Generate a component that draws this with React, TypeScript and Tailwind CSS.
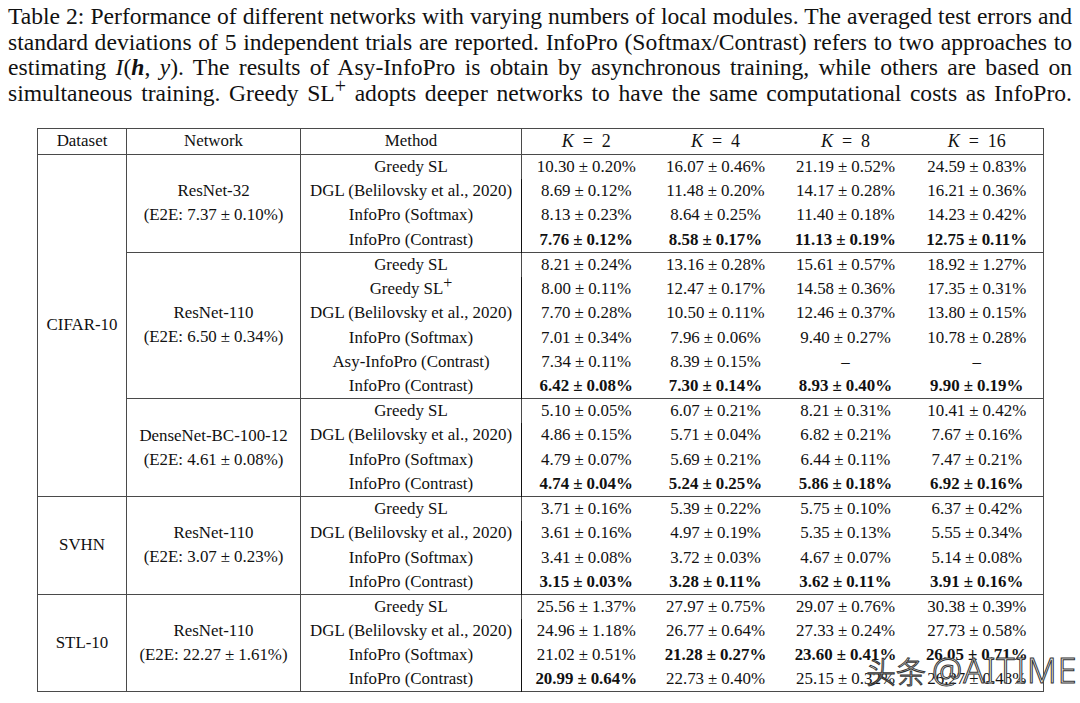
import React from "react";

type Row = { method: React.ReactNode; vals: string[]; bold?: boolean[] };
type Group = { net: string; e2e: string; rows: Row[] };
type DS = { name: string; groups: Group[] };

const SLp = (
  <span>
    Greedy SL<span className="relative -top-[6px] text-[16px] leading-none">+</span>
  </span>
);

const C = "InfoPro (Contrast)";
const S = "InfoPro (Softmax)";
const D = "DGL (Belilovsky et al., 2020)";
const G = "Greedy SL";
const ALLB = [true, true, true, true];

const data: DS[] = [
  {
    name: "CIFAR-10",
    groups: [
      {
        net: "ResNet-32",
        e2e: "(E2E: 7.37 ± 0.10%)",
        rows: [
          { method: G, vals: ["10.30 ± 0.20%", "16.07 ± 0.46%", "21.19 ± 0.52%", "24.59 ± 0.83%"] },
          { method: D, vals: ["8.69 ± 0.12%", "11.48 ± 0.20%", "14.17 ± 0.28%", "16.21 ± 0.36%"] },
          { method: S, vals: ["8.13 ± 0.23%", "8.64 ± 0.25%", "11.40 ± 0.18%", "14.23 ± 0.42%"] },
          { method: C, vals: ["7.76 ± 0.12%", "8.58 ± 0.17%", "11.13 ± 0.19%", "12.75 ± 0.11%"], bold: ALLB },
        ],
      },
      {
        net: "ResNet-110",
        e2e: "(E2E: 6.50 ± 0.34%)",
        rows: [
          { method: G, vals: ["8.21 ± 0.24%", "13.16 ± 0.28%", "15.61 ± 0.57%", "18.92 ± 1.27%"] },
          { method: SLp, vals: ["8.00 ± 0.11%", "12.47 ± 0.17%", "14.58 ± 0.36%", "17.35 ± 0.31%"] },
          { method: D, vals: ["7.70 ± 0.28%", "10.50 ± 0.11%", "12.46 ± 0.37%", "13.80 ± 0.15%"] },
          { method: S, vals: ["7.01 ± 0.34%", "7.96 ± 0.06%", "9.40 ± 0.27%", "10.78 ± 0.28%"] },
          { method: "Asy-InfoPro (Contrast)", vals: ["7.34 ± 0.11%", "8.39 ± 0.15%", "–", "–"] },
          { method: C, vals: ["6.42 ± 0.08%", "7.30 ± 0.14%", "8.93 ± 0.40%", "9.90 ± 0.19%"], bold: ALLB },
        ],
      },
      {
        net: "DenseNet-BC-100-12",
        e2e: "(E2E: 4.61 ± 0.08%)",
        rows: [
          { method: G, vals: ["5.10 ± 0.05%", "6.07 ± 0.21%", "8.21 ± 0.31%", "10.41 ± 0.42%"] },
          { method: D, vals: ["4.86 ± 0.15%", "5.71 ± 0.04%", "6.82 ± 0.21%", "7.67 ± 0.16%"] },
          { method: S, vals: ["4.79 ± 0.07%", "5.69 ± 0.21%", "6.44 ± 0.11%", "7.47 ± 0.21%"] },
          { method: C, vals: ["4.74 ± 0.04%", "5.24 ± 0.25%", "5.86 ± 0.18%", "6.92 ± 0.16%"], bold: ALLB },
        ],
      },
    ],
  },
  {
    name: "SVHN",
    groups: [
      {
        net: "ResNet-110",
        e2e: "(E2E: 3.07 ± 0.23%)",
        rows: [
          { method: G, vals: ["3.71 ± 0.16%", "5.39 ± 0.22%", "5.75 ± 0.10%", "6.37 ± 0.42%"] },
          { method: D, vals: ["3.61 ± 0.16%", "4.97 ± 0.19%", "5.35 ± 0.13%", "5.55 ± 0.34%"] },
          { method: S, vals: ["3.41 ± 0.08%", "3.72 ± 0.03%", "4.67 ± 0.07%", "5.14 ± 0.08%"] },
          { method: C, vals: ["3.15 ± 0.03%", "3.28 ± 0.11%", "3.62 ± 0.11%", "3.91 ± 0.16%"], bold: ALLB },
        ],
      },
    ],
  },
  {
    name: "STL-10",
    groups: [
      {
        net: "ResNet-110",
        e2e: "(E2E: 22.27 ± 1.61%)",
        rows: [
          { method: G, vals: ["25.56 ± 1.37%", "27.97 ± 0.75%", "29.07 ± 0.76%", "30.38 ± 0.39%"] },
          { method: D, vals: ["24.96 ± 1.18%", "26.77 ± 0.64%", "27.33 ± 0.24%", "27.73 ± 0.58%"] },
          { method: S, vals: ["21.02 ± 0.51%", "21.28 ± 0.27%", "23.60 ± 0.41%", "26.05 ± 0.71%"], bold: [false, true, true, true] },
          { method: C, vals: ["20.99 ± 0.64%", "22.73 ± 0.40%", "25.15 ± 0.32%", "26.27 ± 0.48%"], bold: [true, false, false, false] },
        ],
      },
    ],
  },
];

const B = "border-[#4a4a4a]";

function PM({ text }: { text: string }) {
  const parts = text.split(" ± ");
  if (parts.length < 2) return <>{text}</>;
  return (
    <>
      {parts[0]}
      <span className="px-[4px]">±</span>
      {parts[1]}
    </>
  );
}

export default function App() {
  const bodyRows: React.ReactNode[] = [];
  data.forEach((ds, di) => {
    const dsRows = ds.groups.reduce((a, g) => a + g.rows.length, 0);
    ds.groups.forEach((g, gi) => {
      g.rows.forEach((r, ri) => {
        const first = ri === 0;
        const topB = first ? `border-t ${B}` : "";
        bodyRows.push(
          <tr key={`${di}-${gi}-${ri}`} className="h-[24.45px]">
            {gi === 0 && ri === 0 && (
              <td rowSpan={dsRows} className={`border-r border-t ${B} text-center align-middle p-0`}>
                {ds.name}
              </td>
            )}
            {ri === 0 && (
              <td rowSpan={g.rows.length} className={`border-r border-t ${B} text-center align-middle p-0 leading-[24px]`}>
                <div>{g.net}</div>
                <div>
                  <PM text={g.e2e} />
                </div>
              </td>
            )}
            <td className={`border-r ${topB} text-center p-0 whitespace-nowrap`}>{r.method}</td>
            {r.vals.map((v, vi) => (
              <td
                key={vi}
                className={`${topB} text-center p-0 whitespace-nowrap ${r.bold && r.bold[vi] ? "font-bold" : ""}`}
              >
                <PM text={v} />
              </td>
            ))}
          </tr>
        );
      });
    });
  });

  const lines: React.ReactNode[] = [
    "Table 2: Performance of different networks with varying numbers of local modules. The averaged test errors and",
    "standard deviations of 5 independent trials are reported. InfoPro (Softmax/Contrast) refers to two approaches to",
    <>
      estimating <i>I</i>(<b><i>h</i></b>, <i>y</i>). The results of Asy-InfoPro is obtain by asynchronous training, while others are based on
    </>,
    <>
      simultaneous training. Greedy SL<span className="relative -top-[8px] text-[20px] leading-none">+</span> adopts deeper networks to have the same computational costs as InfoPro.
    </>,
  ];

  return (
    <div className="relative w-[1080px] h-[703px] bg-white text-[#111] overflow-hidden font-['Liberation_Serif','Times_New_Roman',serif]">
      <div className="pl-[8px] pr-[8px] pt-[4px] text-[23.6px] leading-[25.7px]">
        {lines.map((l, i) => (
          <div key={i} className="text-justify [text-align-last:justify] whitespace-nowrap">
            {l}
          </div>
        ))}
      </div>
      <div className="pl-[37px] mt-[21px]">
        <table className={`w-[1006px] table-fixed border-collapse border ${B} text-[16.9px] leading-[20px]`}>
          <colgroup>
            <col className="w-[89px]" />
            <col className="w-[174px]" />
            <col className="w-[221px]" />
            <col className="w-[129px]" />
            <col className="w-[130px]" />
            <col className="w-[130px]" />
            <col className="w-[133px]" />
          </colgroup>
          <thead>
            <tr className="h-[26px]">
              <th className={`border-r border-b ${B} font-normal p-0`}>Dataset</th>
              <th className={`border-r border-b ${B} font-normal p-0`}>Network</th>
              <th className={`border-r border-b ${B} font-normal p-0`}>Method</th>
              {["2", "4", "8", "16"].map((k) => (
                <th key={k} className={`border-b ${B} font-normal p-0 text-[18px]`}>
                  <i>K</i>
                  <span className="px-[9px]">=</span>
                  {k}
                </th>
              ))}
            </tr>
          </thead>
          <tbody>{bodyRows}</tbody>
        </table>
      </div>
      <div className="absolute left-[866px] top-[645px] flex items-center gap-[6px] text-white [-webkit-text-stroke:1px_#333] pointer-events-none">
        <span className="text-[30px] font-['Noto_Sans_CJK_SC',sans-serif] font-light">头条</span>
        <span className="text-[34px] font-['Noto_Sans',sans-serif] font-light tracking-[1px]">@AITIME</span>
      </div>
    </div>
  );
}
